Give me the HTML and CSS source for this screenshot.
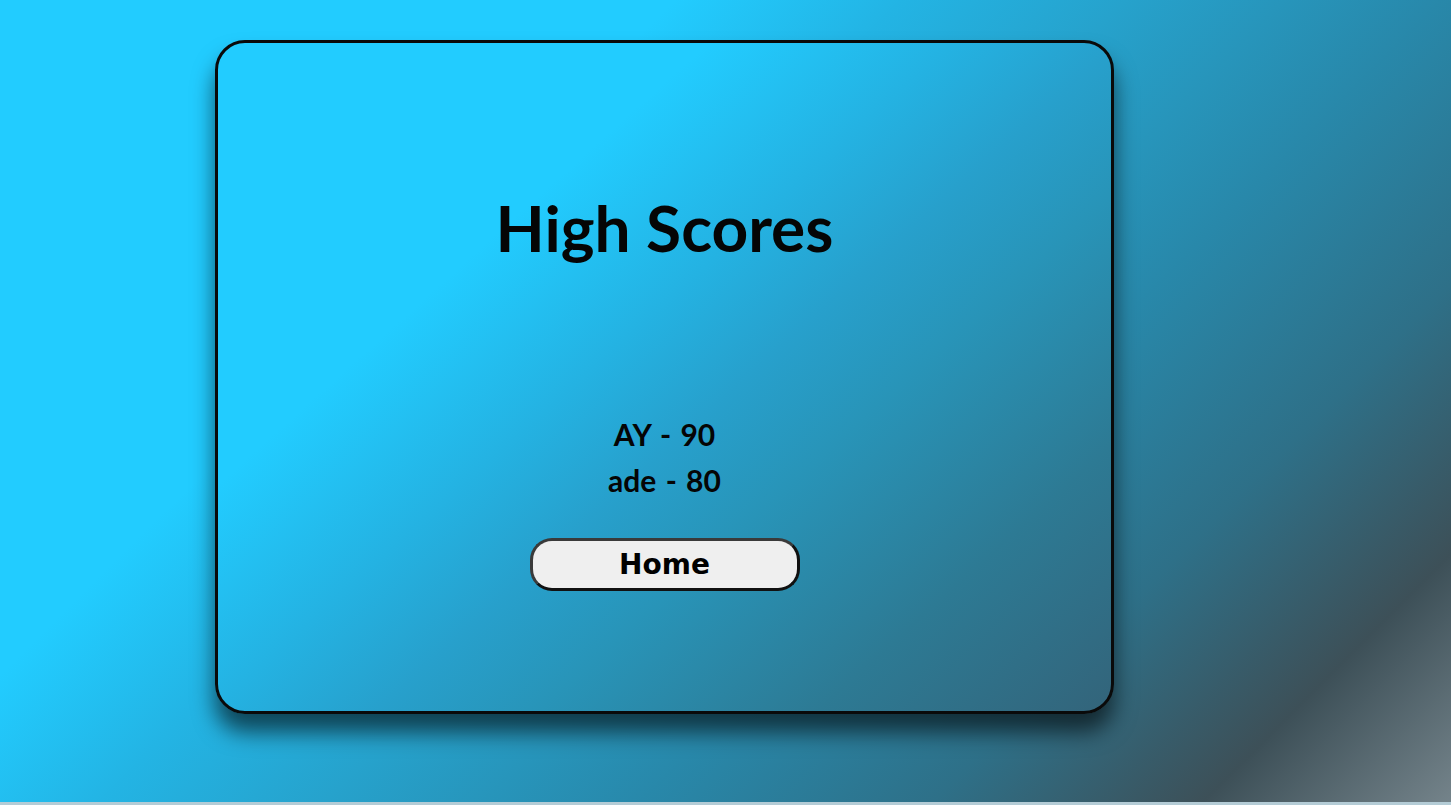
FILE: index.html
```html
<!DOCTYPE html>
<html lang="en">
<head>
<meta charset="utf-8">
<title>High Scores</title>
<link rel="stylesheet" href="styles.css">
</head>
<body>
<div class="page">
  <main class="card">
    <h1 class="title">High Scores</h1>
    <ul class="scores">
      <li>AY - 90</li>
      <li>ade - 80</li>
    </ul>
    <button class="home-btn">Home</button>
  </main>
</div>
</body>
</html>
```

FILE: styles.css
```css
html {
  background: #b4ccd6;
}
body {
  margin: 0;
}
.page {
  height: 802px;
  box-sizing: border-box;
  padding: 40px 0 0 215px;
  background: linear-gradient(135deg, #22ccff 0%, #22ccff 30%, #23b4e4 40%, #26a2cc 50%, #2888aa 64%, #2e7088 77%, #3d5058 89%, #74838a 100%);
  overflow: hidden;
}
.card {
  width: 899px;
  height: 674px;
  box-sizing: border-box;
  border: 3px solid #0a0a0a;
  border-radius: 30px;
  background: linear-gradient(138deg, #22ccff 0%, #22ccff 30%, #24b2e2 45%, #27a0cc 55%, #2894b8 65%, #2d7a94 82%, #33647a 100%);
  box-shadow: 0 18px 22px rgba(0, 0, 0, 0.6);
  display: flex;
  flex-direction: column;
  align-items: center;
  font-family: Lato, "Open Sans", sans-serif;
  color: #050505;
}
.title {
  margin: 145px 0 0;
  font-size: 64px;
  font-weight: 700;
  line-height: 80px;
}
.scores {
  list-style: none;
  margin: 143px 0 0;
  padding: 0;
  text-align: center;
  font-size: 30px;
  font-weight: 700;
  line-height: 46px;
  word-spacing: 2px;
}
.home-btn {
  margin-top: 35px;
  width: 270px;
  height: 53px;
  border: 3px solid #3a3a3a;
  border-bottom-color: #111;
  border-right-color: #111;
  border-radius: 22px;
  background: #efefef;
  font-family: "DejaVu Sans", sans-serif;
  font-weight: 700;
  font-size: 28px;
  color: #000;
  padding: 0;
}
```
